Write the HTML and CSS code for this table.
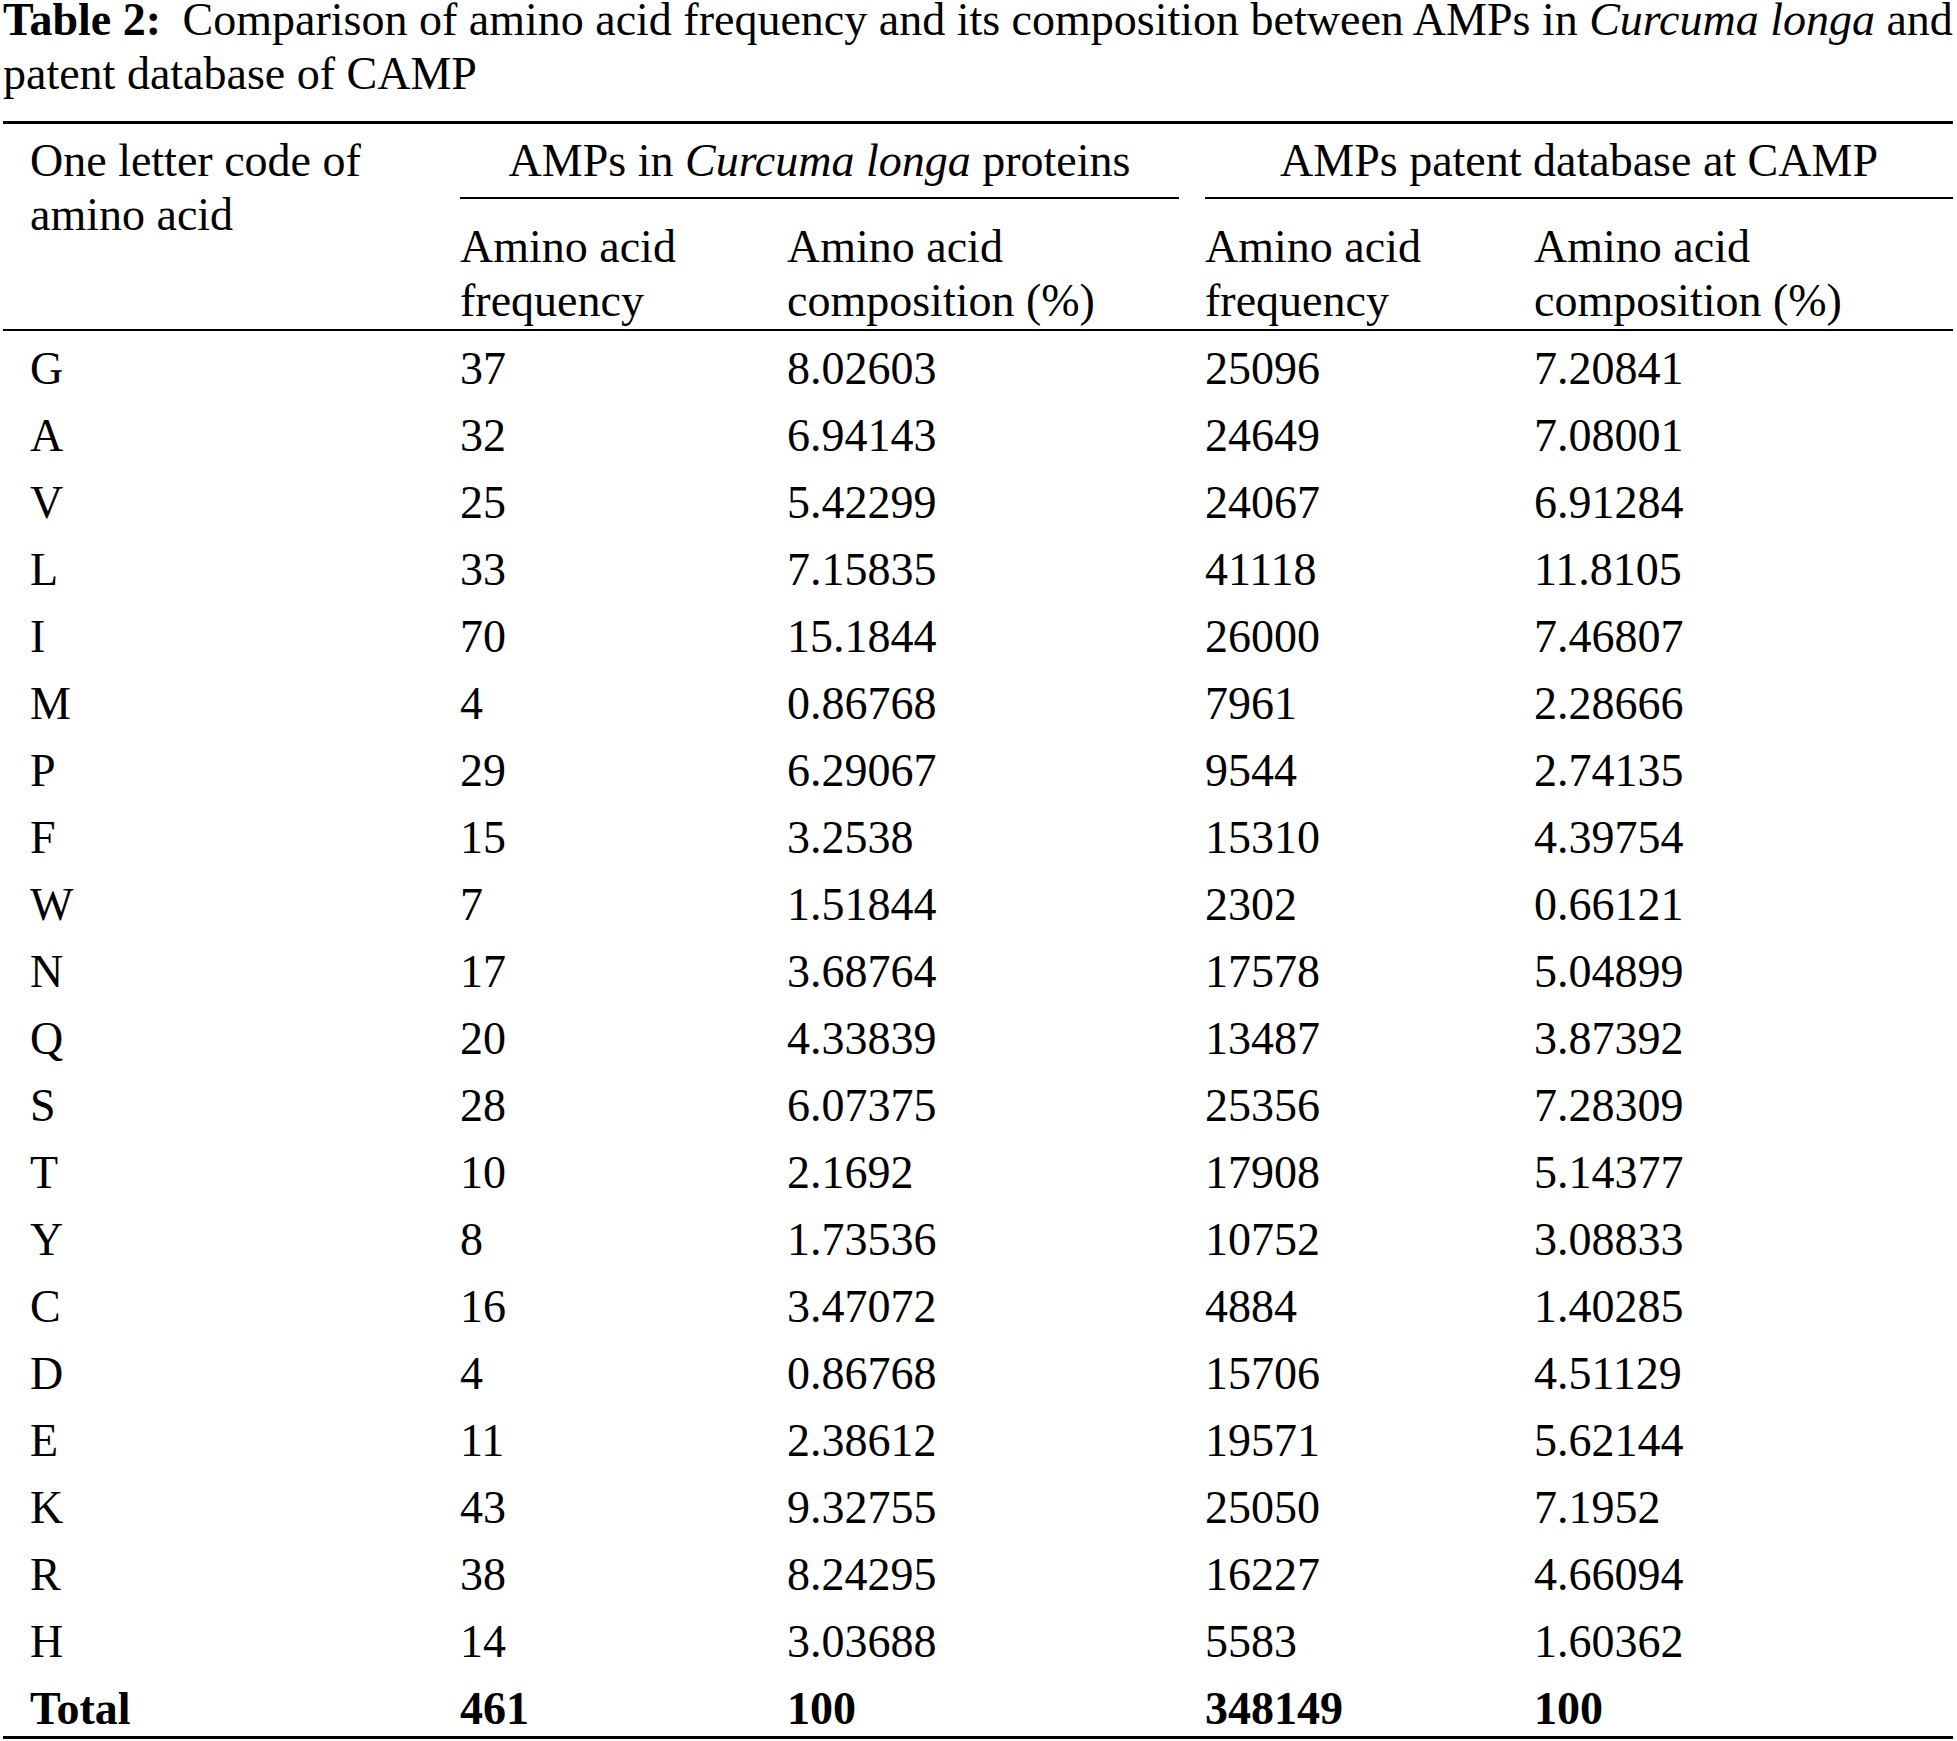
FILE: index.html
```html
<!DOCTYPE html>
<html lang="en">
<head>
<meta charset="utf-8">
<title>Table 2</title>
<link rel="stylesheet" href="styles.css">
</head>
<body>
<div class="page">
  <div class="caption">
    <div class="cap-line"><b class="cap-label">Table 2:</b> Comparison of amino acid frequency and its composition between AMPs in <i>Curcuma longa</i> and</div>
    <div class="cap-line">patent database of CAMP</div>
  </div>
  <table class="data">
    <colgroup>
      <col class="w1"><col class="w2"><col class="w3"><col class="w4"><col class="w5">
    </colgroup>
    <thead>
      <tr class="h1">
        <th rowspan="2" class="code">One letter code of<br>amino acid</th>
        <th colspan="2" class="grp grp-a"><div class="grp-in">AMPs in <i>Curcuma longa</i> proteins</div></th>
        <th colspan="2" class="grp"><div class="grp-in">AMPs patent database at CAMP</div></th>
      </tr>
      <tr class="h2">
        <th class="sub">Amino acid<br>frequency</th>
        <th class="sub">Amino acid<br>composition (%)</th>
        <th class="sub">Amino acid<br>frequency</th>
        <th class="sub">Amino acid<br>composition (%)</th>
      </tr>
    </thead>
    <tbody>
      <tr><td class="code">G</td><td>37</td><td>8.02603</td><td>25096</td><td>7.20841</td></tr>
      <tr><td class="code">A</td><td>32</td><td>6.94143</td><td>24649</td><td>7.08001</td></tr>
      <tr><td class="code">V</td><td>25</td><td>5.42299</td><td>24067</td><td>6.91284</td></tr>
      <tr><td class="code">L</td><td>33</td><td>7.15835</td><td>41118</td><td>11.8105</td></tr>
      <tr><td class="code">I</td><td>70</td><td>15.1844</td><td>26000</td><td>7.46807</td></tr>
      <tr><td class="code">M</td><td>4</td><td>0.86768</td><td>7961</td><td>2.28666</td></tr>
      <tr><td class="code">P</td><td>29</td><td>6.29067</td><td>9544</td><td>2.74135</td></tr>
      <tr><td class="code">F</td><td>15</td><td>3.2538</td><td>15310</td><td>4.39754</td></tr>
      <tr><td class="code">W</td><td>7</td><td>1.51844</td><td>2302</td><td>0.66121</td></tr>
      <tr><td class="code">N</td><td>17</td><td>3.68764</td><td>17578</td><td>5.04899</td></tr>
      <tr><td class="code">Q</td><td>20</td><td>4.33839</td><td>13487</td><td>3.87392</td></tr>
      <tr><td class="code">S</td><td>28</td><td>6.07375</td><td>25356</td><td>7.28309</td></tr>
      <tr><td class="code">T</td><td>10</td><td>2.1692</td><td>17908</td><td>5.14377</td></tr>
      <tr><td class="code">Y</td><td>8</td><td>1.73536</td><td>10752</td><td>3.08833</td></tr>
      <tr><td class="code">C</td><td>16</td><td>3.47072</td><td>4884</td><td>1.40285</td></tr>
      <tr><td class="code">D</td><td>4</td><td>0.86768</td><td>15706</td><td>4.51129</td></tr>
      <tr><td class="code">E</td><td>11</td><td>2.38612</td><td>19571</td><td>5.62144</td></tr>
      <tr><td class="code">K</td><td>43</td><td>9.32755</td><td>25050</td><td>7.1952</td></tr>
      <tr><td class="code">R</td><td>38</td><td>8.24295</td><td>16227</td><td>4.66094</td></tr>
      <tr><td class="code">H</td><td>14</td><td>3.03688</td><td>5583</td><td>1.60362</td></tr>
      <tr class="total"><td class="code">Total</td><td>461</td><td>100</td><td>348149</td><td>100</td></tr>
    </tbody>
  </table>
</div>
</body>
</html>
```
FILE: styles.css
```css
html, body {
  margin: 0;
  padding: 0;
  background: #ffffff;
}

body {
  font-family: "Liberation Serif", "Times New Roman", serif;
  font-size: 46px;
  line-height: 54px;
  color: #000000;
}

.page {
  padding-left: 3px;
  width: 1950px;
}

.caption {
  display: flex;
  flex-direction: column;
  gap: 14px;
  margin-bottom: 27px;
}

.cap-line {
  line-height: 40px;
  white-space: nowrap;
}

.cap-label {
  font-weight: bold;
  margin-right: 10px;
}

.data {
  width: 1950px;
  table-layout: fixed;
  border-collapse: separate;
  border-spacing: 0;
  border-top: 3px solid #000;
  border-bottom: 3px solid #000;
  font-size: 46px;
  line-height: 54px;
}

.w1 { width: 457px; }
.w2 { width: 327px; }
.w3 { width: 418px; }
.w4 { width: 329px; }
.w5 { width: 419px; }

th {
  font-weight: normal;
  text-align: left;
  vertical-align: top;
  padding: 0;
}

td {
  padding: 11px 0 2px 0;
  vertical-align: top;
  white-space: nowrap;
}

.code {
  padding-left: 27px;
}

th.code {
  padding-top: 10px;
  border-bottom: 2px solid #000;
}

.grp {
  padding-top: 10px;
  text-align: center;
}

.grp-a {
  padding-right: 26px;
}

.grp-in {
  padding-bottom: 9px;
  border-bottom: 2px solid #000;
}

.sub {
  padding-top: 21px;
  padding-bottom: 1px;
  border-bottom: 2px solid #000;
}

.total td {
  font-weight: bold;
  padding-bottom: 0;
}
```
